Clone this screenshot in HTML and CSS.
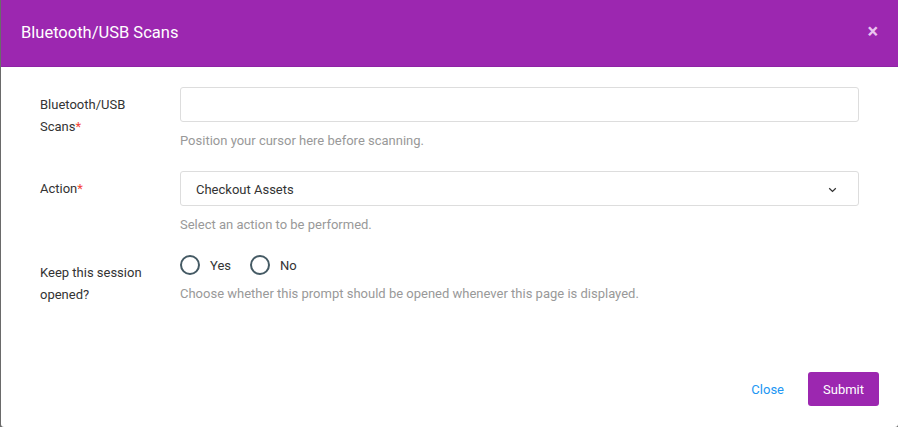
FILE: index.html
```html
<!DOCTYPE html>
<html>
<head>
<meta charset="utf-8">
<link rel="stylesheet" href="styles.css">
</head>
<body>
<div class="modal">
  <div class="modal-header">
    <h4 class="modal-title">Bluetooth/USB Scans</h4>
    <span class="close-x">&times;</span>
  </div>
  <div class="modal-body">
    <div class="form-row">
      <label class="form-label">Bluetooth/USB Scans<span class="req">*</span></label>
      <div class="form-field">
        <input class="form-input" type="text">
        <div class="help">Position your cursor here before scanning.</div>
      </div>
    </div>
    <div class="form-row">
      <label class="form-label">Action<span class="req">*</span></label>
      <div class="form-field">
        <div class="form-select">
          <span>Checkout Assets</span>
          <svg class="chev" width="9" height="6" viewBox="0 0 9 6"><path d="M1.2 1.3 L4.5 4.4 L7.8 1.3" fill="none" stroke="#333" stroke-width="1.3"/></svg>
        </div>
        <div class="help">Select an action to be performed.</div>
      </div>
    </div>
    <div class="form-row">
      <label class="form-label">Keep this session opened?</label>
      <div class="form-field">
        <div class="radios">
          <label class="radio"><span class="circle"></span>Yes</label>
          <label class="radio"><span class="circle"></span>No</label>
        </div>
        <div class="help">Choose whether this prompt should be opened whenever this page is displayed.</div>
      </div>
    </div>
  </div>
  <div class="modal-footer">
    <button class="btn-link">Close</button>
    <button class="btn-primary">Submit</button>
  </div>
</div>
</body>
</html>
```

FILE: styles.css
```css
* { box-sizing: border-box; }
html, body { margin: 0; padding: 0; height: 100%; }
body {
  background: #6a6a6a;
  font-family: Roboto, "Liberation Sans", sans-serif;
  display: flex;
}
.modal {
  margin-left: 1px;
  flex: 1;
  background: #fff;
  display: flex;
  flex-direction: column;
  height: 427px;
  border-radius: 0 0 3px 3px;
  overflow: hidden;
}
.modal-header {
  background: #9c27b0;
  height: 67px;
  border-bottom: 1px solid #8e24a5;
  display: flex;
  align-items: center;
  justify-content: space-between;
  padding: 0 20px 0 20px;
}
.modal-title {
  margin: 0;
  color: #fff;
  font-size: 16.5px;
  font-weight: 400;
  line-height: 24px;
}
.close-x {
  color: #f3d6f7;
  font-size: 20px;
  font-weight: 700;
  line-height: 20px;
  margin-top: -4px;
  opacity: 0.9;
}
.modal-body {
  flex: 1;
  padding: 20px 39px 0 39px;
}
.form-row {
  display: flex;
  margin-bottom: 20px;
}
.form-label {
  width: 140px;
  flex: none;
  padding-top: 7px;
  padding-right: 30px;
  font-size: 13px;
  line-height: 22px;
  color: #333;
}
.req { color: #f44336; }
.form-field { flex: 1; }
.form-input {
  display: block;
  width: 100%;
  height: 35px;
  border: 1px solid #ddd;
  border-radius: 3px;
  font: inherit;
  outline: none;
}
.form-select {
  height: 35px;
  border: 1px solid #ddd;
  border-radius: 3px;
  display: flex;
  align-items: center;
  justify-content: space-between;
  padding: 1px 21px 0 15px;
  font-size: 13px;
  color: #333;
}
.chev { margin-top: 1px; }
.help {
  margin-top: 9px;
  font-size: 13px;
  line-height: 20px;
  color: #999;
}
.radios {
  display: flex;
  height: 20px;
  align-items: center;
  gap: 19px;
}
.radio {
  display: flex;
  align-items: center;
  font-size: 13px;
  color: #333;
}
.circle {
  width: 20px;
  height: 20px;
  border: 2px solid #455a64;
  border-radius: 50%;
  margin-right: 10px;
}
.modal-footer {
  display: flex;
  justify-content: flex-end;
  align-items: center;
  gap: 24px;
  padding: 0 19px 21px 0;
}
.btn-link {
  background: none;
  border: none;
  color: #2196f3;
  font: inherit;
  font-size: 13px;
  padding: 0;
}
.btn-primary {
  background: #9c27b0;
  color: #fff;
  border: none;
  border-radius: 3px;
  font: inherit;
  font-size: 13px;
  width: 71px;
  height: 34px;
  padding: 0;
}
```
